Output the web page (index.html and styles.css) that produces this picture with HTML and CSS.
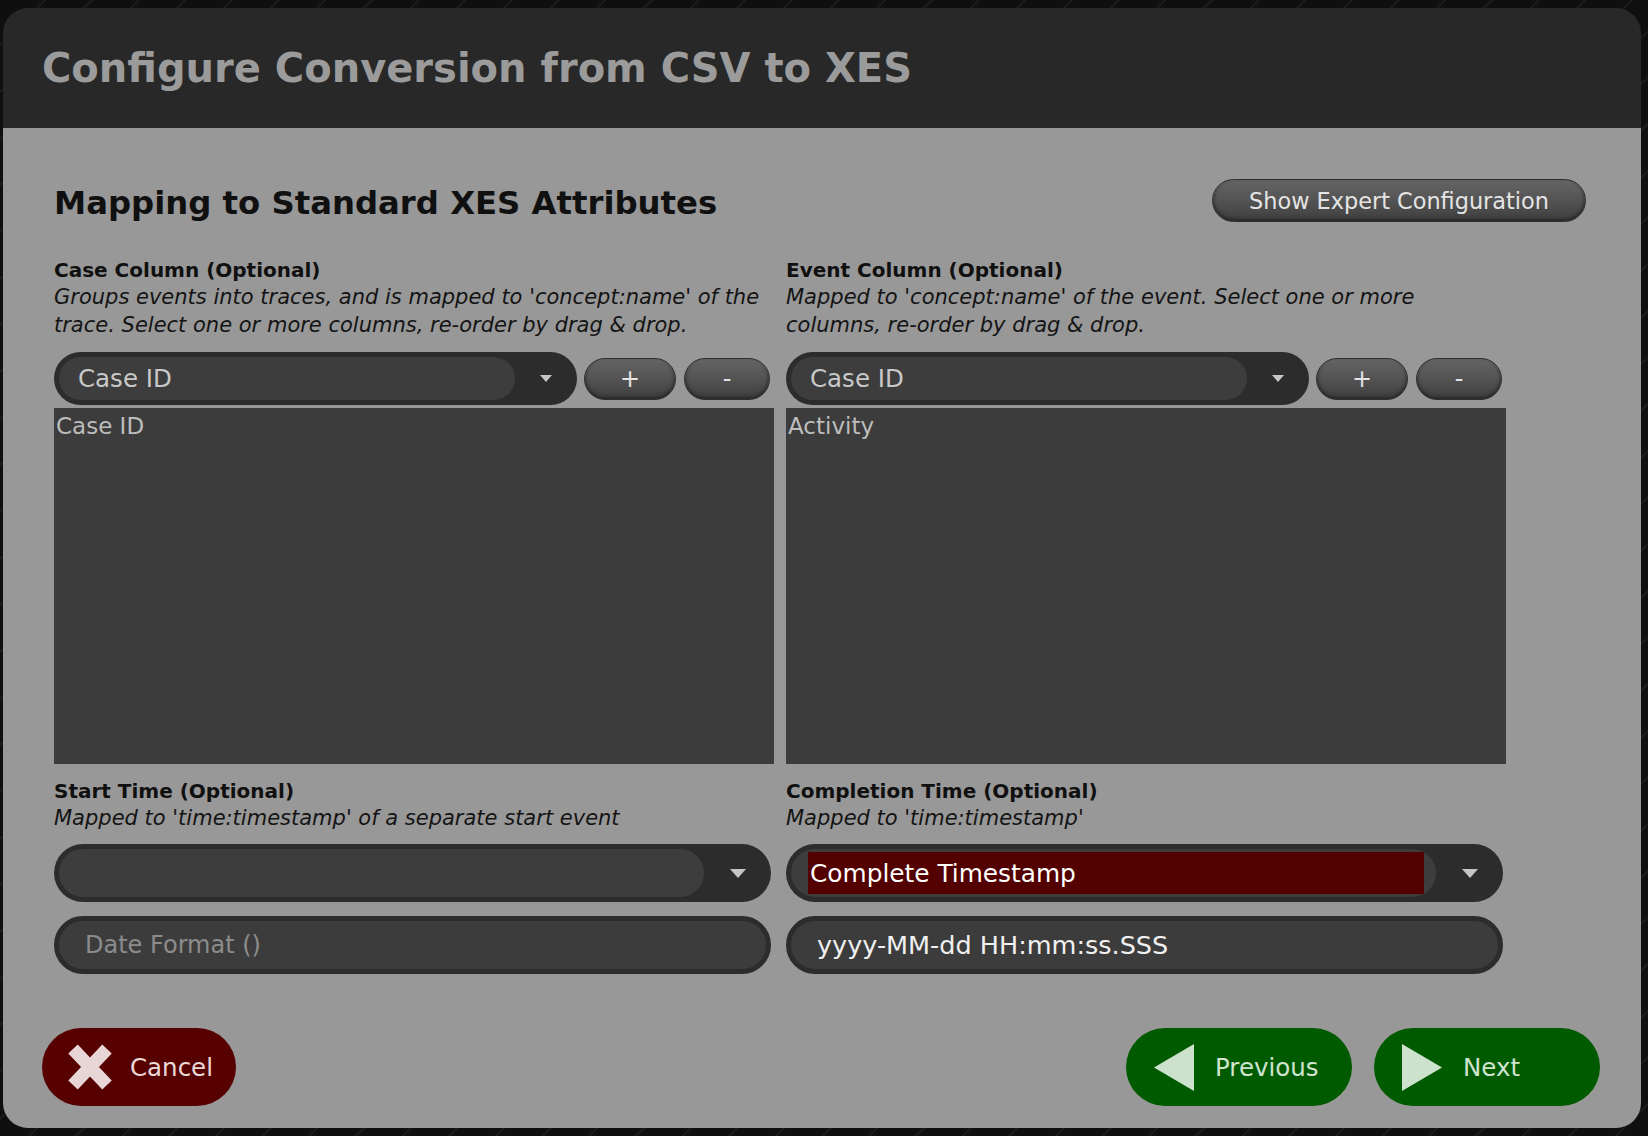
FILE: index.html
```html
<!DOCTYPE html>
<html lang="en">
<head>
<meta charset="utf-8">
<title>Configure Conversion from CSV to XES</title>
<link rel="stylesheet" href="styles.css">
</head>
<body>
<div class="dialog">
  <header class="dialog-header">
    <h1 class="dialog-title">Configure Conversion from CSV to XES</h1>
  </header>
  <main class="dialog-body">
    <section class="content">
      <div class="section-head">
        <h2 class="section-title">Mapping to Standard XES Attributes</h2>
        <button class="pill-btn expert-btn">Show Expert Configuration</button>
      </div>
      <div class="mapping-grid">
        <div class="field-group">
          <div class="field-label">Case Column (Optional)</div>
          <div class="field-desc">Groups events into traces, and is mapped to 'concept:name' of the<br>trace. Select one or more columns, re-order by drag &amp; drop.</div>
          <div class="combo-row">
            <div class="combo combo-sm">
              <div class="combo-value"><span class="combo-text">Case ID</span></div>
              <div class="combo-arrow"><span class="tri tri-sm"></span></div>
            </div>
            <button class="pill-btn add-btn">+</button>
            <button class="pill-btn remove-btn">-</button>
          </div>
          <div class="column-list"><div class="list-item">Case ID</div></div>
        </div>
        <div class="field-group">
          <div class="field-label">Event Column (Optional)</div>
          <div class="field-desc">Mapped to 'concept:name' of the event. Select one or more<br>columns, re-order by drag &amp; drop.</div>
          <div class="combo-row">
            <div class="combo combo-sm">
              <div class="combo-value"><span class="combo-text">Case ID</span></div>
              <div class="combo-arrow"><span class="tri tri-sm"></span></div>
            </div>
            <button class="pill-btn add-btn">+</button>
            <button class="pill-btn remove-btn">-</button>
          </div>
          <div class="column-list"><div class="list-item">Activity</div></div>
        </div>
        <div class="field-group">
          <div class="field-label">Start Time (Optional)</div>
          <div class="field-desc">Mapped to 'time:timestamp' of a separate start event</div>
          <div class="combo combo-lg">
            <div class="combo-value"></div>
            <div class="combo-arrow"><span class="tri tri-lg"></span></div>
          </div>
          <div class="text-field"><span class="placeholder">Date Format ()</span></div>
        </div>
        <div class="field-group">
          <div class="field-label">Completion Time (Optional)</div>
          <div class="field-desc">Mapped to 'time:timestamp'</div>
          <div class="combo combo-lg">
            <div class="combo-value combo-value-selected"><span class="selected-text">Complete Timestamp</span></div>
            <div class="combo-arrow"><span class="tri tri-lg"></span></div>
          </div>
          <div class="text-field"><span class="field-value">yyyy-MM-dd HH:mm:ss.SSS</span></div>
        </div>
      </div>
    </section>
    <footer class="footer">
      <button class="action-btn cancel-btn">
        <svg class="btn-icon" width="44" height="46" viewBox="0 0 44 46"><path d="M5 5 L39 41 M39 5 L5 41" stroke="#e8d6d6" stroke-width="13" fill="none"/></svg>
        <span class="cancel-label">Cancel</span>
      </button>
      <div class="nav-group">
        <button class="action-btn nav-btn">
          <svg class="btn-icon" width="40" height="47" viewBox="0 0 40 47"><polygon points="40,0 40,47 0,23.5" fill="#cde2cd"/></svg>
          <span class="nav-label">Previous</span>
        </button>
        <button class="action-btn nav-btn">
          <svg class="btn-icon" width="40" height="47" viewBox="0 0 40 47"><polygon points="0,0 0,47 40,23.5" fill="#cde2cd"/></svg>
          <span class="nav-label">Next</span>
        </button>
      </div>
    </footer>
  </main>
</div>
</body>
</html>
```

FILE: styles.css
```css
html, body {
  margin: 0;
}

body {
  width: 1648px;
  height: 1136px;
  box-sizing: border-box;
  overflow: hidden;
  padding: 8px 7px 8px 3px;
  background-color: #0f0f0f;
  background-image: repeating-linear-gradient(135deg, rgba(255,255,255,0) 0 31px, rgba(255,255,255,0.05) 31px 33px);
  font-family: "DejaVu Sans", sans-serif;
}

.dialog {
  height: 1120px;
  border-radius: 25px;
  overflow: hidden;
  display: flex;
  flex-direction: column;
}

.dialog-header {
  flex: none;
  height: 120px;
  box-sizing: border-box;
  background: #282828;
  display: flex;
  align-items: center;
  padding: 0 0 0 39px;
}

.dialog-title {
  margin: 0;
  font-size: 40px;
  line-height: 1.164;
  font-weight: bold;
  color: #9b9b9b;
}

.dialog-body {
  flex: 1;
  background: #989898;
  display: flex;
  flex-direction: column;
}

.content {
  padding: 51px 55px 0 51px;
}

.section-head {
  display: flex;
  justify-content: space-between;
  align-items: flex-start;
}

.section-title {
  margin: 0;
  padding-top: 3px;
  font-size: 32.3px;
  line-height: 43px;
  font-weight: bold;
  color: #101010;
}

.pill-btn {
  font-family: inherit;
  box-sizing: border-box;
  padding: 0;
  border: 1px solid #2f2f2f;
  border-radius: 999px;
  background: linear-gradient(#646464, #555555 45%, #474747 80%, #404040);
  color: #e4e4e4;
  box-shadow: inset 0 0 0 2px rgba(0,0,0,0.12), inset 0 2px 1px rgba(255,255,255,0.08), inset 0 -3px 4px rgba(0,0,0,0.25);
}

.expert-btn {
  width: 374px;
  height: 43px;
  font-size: 22.4px;
}

.mapping-grid {
  margin-top: 32px;
  display: grid;
  grid-template-columns: 720px 720px;
  column-gap: 12px;
  row-gap: 14px;
}

.field-group {
  display: flex;
  flex-direction: column;
}

.field-label {
  font-size: 20px;
  line-height: 26px;
  font-weight: bold;
  color: #101010;
}

.field-desc {
  font-size: 21px;
  line-height: 28px;
  font-style: italic;
  color: #141414;
}

.combo-row {
  display: flex;
  align-items: center;
  height: 53px;
  margin-top: 13px;
}

.combo {
  display: flex;
  box-sizing: border-box;
  background: #2c2c2c;
  border-radius: 999px;
  padding: 5px 0 5px 5px;
}

.combo-sm {
  width: 523px;
  height: 53px;
}

.combo-lg {
  width: 717px;
  height: 58px;
  margin-top: 12px;
}

.combo-value {
  flex: 1;
  display: flex;
  align-items: center;
  background: #3d3d3d;
  border-radius: 999px;
  padding-left: 19px;
}

.combo-text {
  font-size: 24.5px;
  color: #c8c8c8;
}

.combo-value-selected {
  padding: 3px 12px 3px 17px;
  align-items: stretch;
}

.selected-text {
  flex: 1;
  display: flex;
  align-items: center;
  padding-left: 2px;
  background: #520000;
  color: #ffffff;
  font-size: 24.8px;
}

.combo-arrow {
  display: flex;
  align-items: center;
  justify-content: center;
}

.combo-sm .combo-arrow {
  width: 62px;
}

.combo-lg .combo-arrow {
  width: 67px;
}

.tri {
  width: 0;
  height: 0;
  border-style: solid;
  border-color: #c6c6c6 transparent transparent transparent;
}

.tri-sm {
  border-width: 7px 6.5px 0 6.5px;
}

.tri-lg {
  border-width: 9px 8.5px 0 8.5px;
}

.add-btn {
  margin-left: 7px;
  width: 92px;
  height: 42px;
  font-size: 24px;
}

.remove-btn {
  margin-left: 8px;
  width: 86px;
  height: 42px;
  font-size: 24px;
}

.column-list {
  margin-top: 3px;
  height: 356px;
  box-sizing: border-box;
  background: #3c3c3c;
  padding: 5px 2px;
}

.list-item {
  font-size: 23px;
  line-height: 1.164;
  color: #bdbdbd;
}

.text-field {
  margin-top: 14px;
  width: 717px;
  height: 58px;
  box-sizing: border-box;
  border: 5px solid #2c2c2c;
  border-radius: 999px;
  background: #3c3c3c;
  display: flex;
  align-items: center;
  padding-left: 26px;
}

.placeholder {
  font-size: 24px;
  color: #8c8c8c;
}

.field-value {
  font-size: 25.5px;
  color: #f0f0f0;
}

.footer {
  margin-top: auto;
  display: flex;
  justify-content: space-between;
  padding: 0 41px 22px 39px;
}

.nav-group {
  display: flex;
  gap: 22px;
}

.action-btn {
  height: 78px;
  box-sizing: border-box;
  border: none;
  border-radius: 39px;
  display: flex;
  align-items: center;
  justify-content: flex-start;
  font-family: inherit;
  font-size: 24.5px;
  padding: 0;
}

.cancel-btn {
  width: 194px;
  padding-left: 26px;
  background: #570000;
  color: #ead9d9;
}

.cancel-btn .btn-icon {
  margin-right: 18px;
}

.nav-btn {
  width: 226px;
  padding-left: 28px;
  background: #005a00;
  color: #d0e4d0;
}

.nav-btn .btn-icon {
  margin-right: 21px;
}

.btn-icon {
  flex: none;
  display: block;
}
```
